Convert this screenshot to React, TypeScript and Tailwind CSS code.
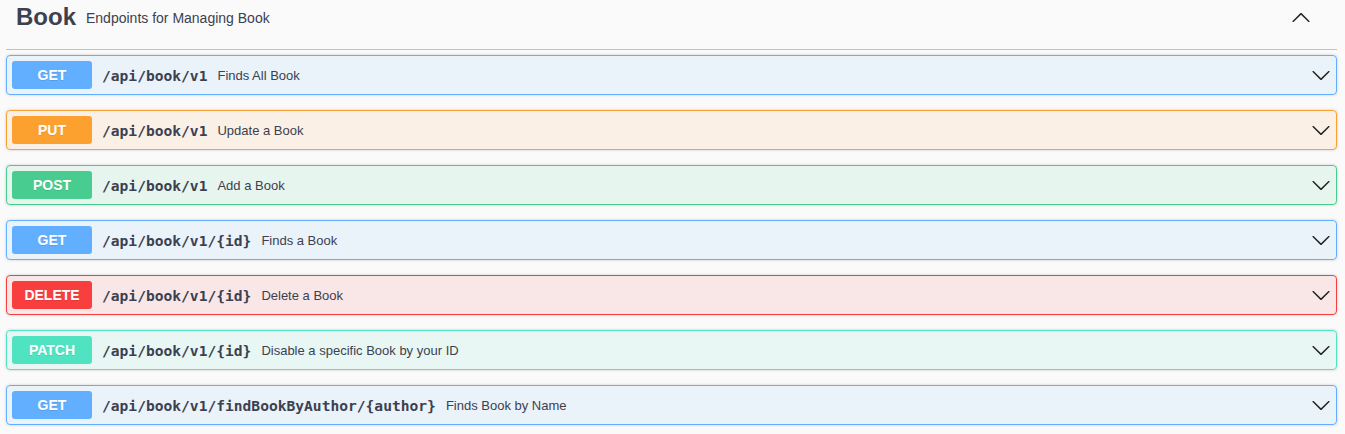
import React from "react";

type Method = "GET" | "PUT" | "POST" | "DELETE" | "PATCH";

interface Endpoint {
  method: Method;
  path: string;
  summary: string;
}

// One style set per HTTP method, written out in full so Tailwind picks them up
const methodStyles: Record<Method, { box: string; badge: string }> = {
  GET: { box: "border-[#61affe] bg-[#61affe]/10", badge: "bg-[#61affe]" },
  PUT: { box: "border-[#fca130] bg-[#fca130]/10", badge: "bg-[#fca130]" },
  POST: { box: "border-[#49cc90] bg-[#49cc90]/10", badge: "bg-[#49cc90]" },
  DELETE: { box: "border-[#f93e3e] bg-[#f93e3e]/10", badge: "bg-[#f93e3e]" },
  PATCH: { box: "border-[#50e3c2] bg-[#50e3c2]/10", badge: "bg-[#50e3c2]" },
};

const endpoints: Endpoint[] = [
  { method: "GET", path: "/api/book/v1", summary: "Finds All Book" },
  { method: "PUT", path: "/api/book/v1", summary: "Update a Book" },
  { method: "POST", path: "/api/book/v1", summary: "Add a Book" },
  { method: "GET", path: "/api/book/v1/{id}", summary: "Finds a Book" },
  { method: "DELETE", path: "/api/book/v1/{id}", summary: "Delete a Book" },
  { method: "PATCH", path: "/api/book/v1/{id}", summary: "Disable a specific Book by your ID" },
  { method: "GET", path: "/api/book/v1/findBookByAuthor/{author}", summary: "Finds Book by Name" },
];

function ArrowDown() {
  return (
    <svg width="20" height="20" viewBox="0 0 20 20" className="fill-[#222]">
      <path d="M17.418 6.109c.272-.268.709-.268.979 0s.271.701 0 .969l-7.908 7.83c-.27.268-.707.268-.979 0l-7.908-7.83c-.27-.268-.27-.701 0-.969.271-.268.709-.268.979 0L10 13.25l7.418-7.141z" />
    </svg>
  );
}

function ArrowUp() {
  return (
    <svg width="20" height="20" viewBox="0 0 20 20" className="fill-[#222]">
      <path d="M17.418 14.908c.272.268.709.268.979 0s.271-.701 0-.969l-7.908-7.83c-.27-.268-.707-.268-.979 0l-7.908 7.83c-.27.268-.27.701 0 .969.271.268.709.268.979 0L10 7.767l7.418 7.141z" />
    </svg>
  );
}

function EndpointRow({ endpoint }: { endpoint: Endpoint }) {
  const styles = methodStyles[endpoint.method];
  return (
    <div
      className={`mb-[15px] h-[40px] rounded-[4px] border shadow-[0_0_3px_rgba(0,0,0,0.19)] ${styles.box}`}
    >
      <div className="flex h-full items-center p-[5px]">
        {/* Method badge */}
        <span
          className={`flex h-[28px] min-w-[80px] items-center justify-center rounded-[3px] pt-[1px] text-[14px] font-bold text-white [text-shadow:0_1px_0_rgba(0,0,0,0.1)] ${styles.badge}`}
        >
          {endpoint.method}
        </span>

        {/* Path */}
        <span className="px-[10px] pt-[2px] font-['DejaVu_Sans_Mono',monospace] text-[14.6px] font-bold text-[#3b4151]">
          {endpoint.path}
        </span>

        {/* Summary */}
        <span className="flex-1 pt-[2px] text-[13px] text-[#3b4151]">{endpoint.summary}</span>

        <span className="flex items-center">
          <ArrowDown />
        </span>
      </div>
    </div>
  );
}

export default function App() {
  return (
    <div className="min-h-screen bg-[#fafafa] pl-[6px] pr-[8px] font-['Liberation_Sans',Arial,sans-serif]">
      {/* Tag header */}
      <div className="mb-[5px] h-[50px] border-b border-[#3b4151]/30 pb-[15px] pl-[10px] pr-[26px]">
        <div className="flex h-full items-center">
          <h3 className="text-[24px] font-bold text-[#3b4151]">Book</h3>
          <p className="flex-1 px-[10px] pt-[2px] text-[14px] text-[#3b4151]">
            Endpoints for Managing Book
          </p>
          <ArrowUp />
        </div>
      </div>

      {/* Operations */}
      {endpoints.map((endpoint, i) => (
        <EndpointRow key={i} endpoint={endpoint} />
      ))}
    </div>
  );
}
